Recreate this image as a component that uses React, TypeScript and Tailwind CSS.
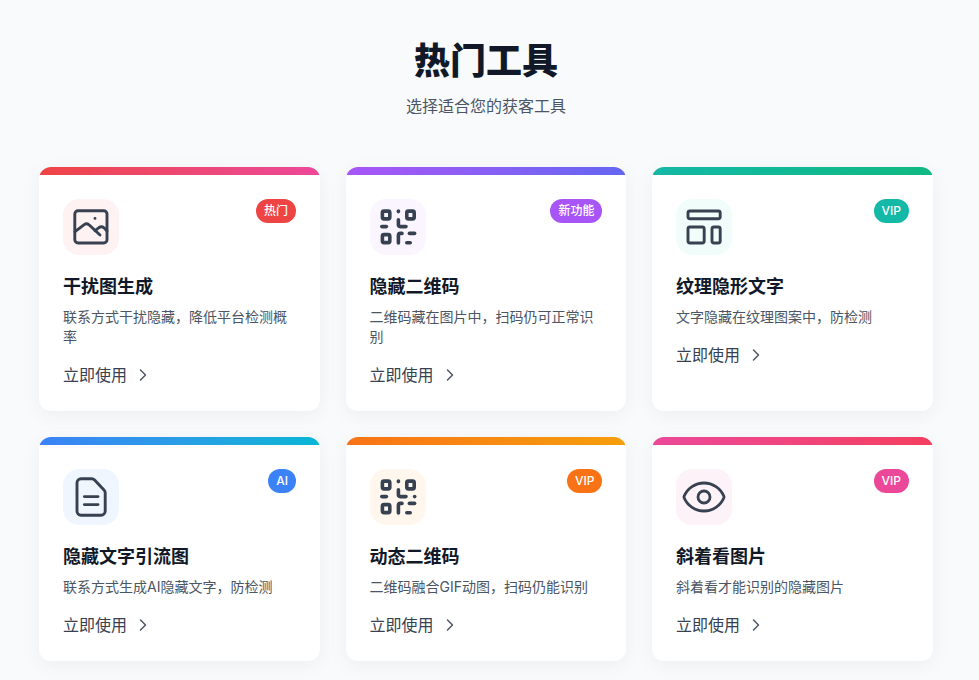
import type { ReactNode } from 'react'
import { ChevronRight, Eye } from 'lucide-react'

const iconClass = 'h-12 w-12 text-[#374151]'

function Svg({ width = 1.45, children }: { width?: number; children: ReactNode }) {
  return (
    <svg viewBox="0 0 24 24" fill="none" stroke="currentColor" strokeWidth={width} strokeLinecap="round" strokeLinejoin="round" className={iconClass}>
      {children}
    </svg>
  )
}

function PictureIcon() {
  return (
    <Svg>
      <rect x="3.9" y="3.9" width="16.1" height="16.1" rx="1.6" />
      <path d="M4 14.3 L8.6 10.8 Q9.8 10 11 10.9 L16.5 16" />
      <path d="M14 13.8 L16 12.3 Q17.3 11.5 18.5 12.4 L20 14" />
      <circle cx="14" cy="7.7" r="0.7" fill="currentColor" stroke="none" />
    </Svg>
  )
}

function QrIcon({ dot }: { dot?: boolean }) {
  return (
    <Svg width={1.8}>
      <rect x="4.2" y="4.05" width="3.7" height="3.9" rx="0.8" />
      <rect x="16.4" y="4.05" width="3.7" height="3.9" rx="0.8" />
      <rect x="4.2" y="15.8" width="3.7" height="4" rx="0.8" />
      <path d="M12.2 4v0.3" />
      <path d="M12.2 8.4v2.4q0 1 1 1h2.8" />
      <path d="M3.9 11.8h2.3" />
      <path d="M12.2 20v-3.8q0-1 1-1h0.8" />
      <path d="M17.7 15.2h2.6" />
      <path d="M16.4 19.9h1.7" />
      {dot && <path d="M20.3 11.8h0.05" />}
    </Svg>
  )
}

function LayoutIcon() {
  return (
    <Svg>
      <rect x="4" y="4" width="16.1" height="3.9" rx="1" />
      <rect x="4" y="12" width="8.1" height="8" rx="1" />
      <rect x="16" y="12" width="4.1" height="8" rx="1" />
    </Svg>
  )
}

function DocIcon() {
  return (
    <Svg>
      <path d="M7 2.9h5.4q0.8 0 1.4 0.6l4.7 5q0.6 0.6 0.6 1.4V19a2.1 2.1 0 0 1-2.1 2.1H7A2.1 2.1 0 0 1 5 19V5A2.1 2.1 0 0 1 7 2.9z" />
      <path d="M8.7 11.8h6.8" />
      <path d="M8.7 15.8h6.8" />
    </Svg>
  )
}

type Tool = {
  title: string
  desc: string
  badge: string
  badgeClass: string
  barClass: string
  iconBgClass: string
  icon: ReactNode
}

const tools: Tool[] = [
  {
    title: '干扰图生成',
    desc: '联系方式干扰隐藏，降低平台检测概率',
    badge: '热门',
    badgeClass: 'bg-[#ef4444]',
    barClass: 'from-[#ef4444] to-[#ec4899]',
    iconBgClass: 'bg-[#fef2f2]',
    icon: <PictureIcon />,
  },
  {
    title: '隐藏二维码',
    desc: '二维码藏在图片中，扫码仍可正常识别',
    badge: '新功能',
    badgeClass: 'bg-[#a855f7]',
    barClass: 'from-[#a855f7] to-[#6366f1]',
    iconBgClass: 'bg-[#faf5ff]',
    icon: <QrIcon />,
  },
  {
    title: '纹理隐形文字',
    desc: '文字隐藏在纹理图案中，防检测',
    badge: 'VIP',
    badgeClass: 'bg-[#14b8a6]',
    barClass: 'from-[#14b8a6] to-[#10b981]',
    iconBgClass: 'bg-[#f0fdfa]',
    icon: <LayoutIcon />,
  },
  {
    title: '隐藏文字引流图',
    desc: '联系方式生成AI隐藏文字，防检测',
    badge: 'AI',
    badgeClass: 'bg-[#3b82f6]',
    barClass: 'from-[#3b82f6] to-[#06b6d4]',
    iconBgClass: 'bg-[#eff6ff]',
    icon: <DocIcon />,
  },
  {
    title: '动态二维码',
    desc: '二维码融合GIF动图，扫码仍能识别',
    badge: 'VIP',
    badgeClass: 'bg-[#f97316]',
    barClass: 'from-[#f97316] to-[#f59e0b]',
    iconBgClass: 'bg-[#fff7ed]',
    icon: <QrIcon dot />,
  },
  {
    title: '斜着看图片',
    desc: '斜着看才能识别的隐藏图片',
    badge: 'VIP',
    badgeClass: 'bg-[#ec4899]',
    barClass: 'from-[#ec4899] to-[#f43f5e]',
    iconBgClass: 'bg-[#fdf2f8]',
    icon: <Eye className={iconClass} strokeWidth={1.4} />,
  },
]

function ToolCard({ tool }: { tool: Tool }) {
  return (
    <div className="overflow-hidden rounded-xl bg-white shadow-[0_4px_20px_rgba(0,0,0,0.05)]">
      <div className={`h-2 bg-gradient-to-r ${tool.barClass}`} />
      <div className="p-6">
        <div className="mb-[18px] flex items-start justify-between">
          <div className={`flex h-14 w-14 items-center justify-center rounded-2xl ${tool.iconBgClass}`}>
            {tool.icon}
          </div>
          <span className={`rounded-full px-2 py-1 text-xs font-medium text-white ${tool.badgeClass}`}>
            {tool.badge}
          </span>
        </div>
        <h3 className="mb-1.5 text-lg font-bold text-[#111827]">{tool.title}</h3>
        <p className="text-sm text-[#4b5563]">{tool.desc}</p>
        <a className="mt-4 flex items-center text-base text-[#374151]">
          立即使用
          <ChevronRight className="ml-1.5 h-5 w-5 text-[#4b5563]" strokeWidth={1.75} />
        </a>
      </div>
    </div>
  )
}

export default function App() {
  return (
    <div className="min-h-screen bg-[#f8fafc] pt-[41px] pr-[46px] pb-5 pl-[39px] font-['Inter','Noto_Sans_CJK_SC',sans-serif]">
      <div className="mb-[49px] text-center">
        <h2 className="mb-[13px] text-4xl font-extrabold text-[#111827]">热门工具</h2>
        <p className="text-base text-[#4b5563]">选择适合您的获客工具</p>
      </div>
      <div className="grid grid-cols-3 gap-[25.6px]">
        {tools.map(tool => (
          <ToolCard key={tool.title} tool={tool} />
        ))}
      </div>
    </div>
  )
}
